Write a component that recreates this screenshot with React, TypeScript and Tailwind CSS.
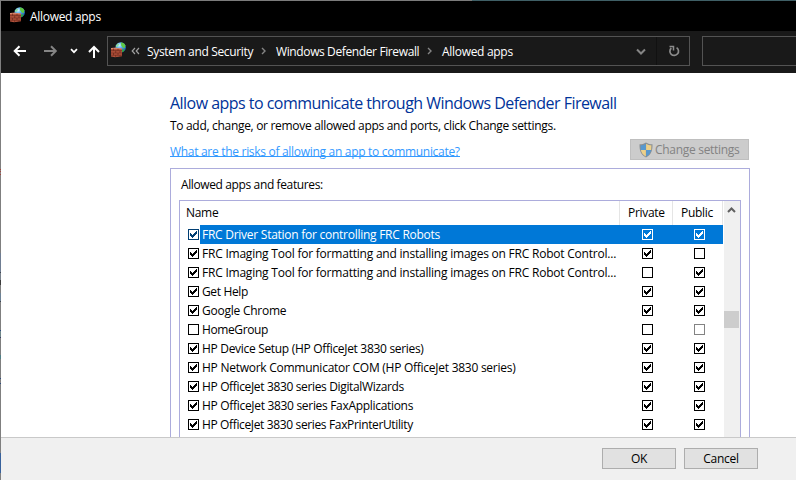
import React from "react";

const BASE = "whitespace-pre [font-family:'Open_Sans','Noto_Sans',sans-serif]";

type Row = { name: string; on: boolean; priv: boolean; pub: boolean; faded?: boolean; fit: string };

const rows: Row[] = [
  { name: "FRC Driver Station for controlling FRC Robots", on: true, priv: true, pub: true, fit: "tracking-[-0.26px]" },
  { name: "FRC Imaging Tool for formatting and installing images on FRC Robot Control...", on: true, priv: true, pub: false, fit: "tracking-[-0.22px]" },
  { name: "FRC Imaging Tool for formatting and installing images on FRC Robot Control...", on: true, priv: false, pub: true, fit: "tracking-[-0.22px]" },
  { name: "Get Help", on: true, priv: true, pub: true, fit: "tracking-[-0.35px]" },
  { name: "Google Chrome", on: true, priv: true, pub: true, fit: "tracking-[-0.24px]" },
  { name: "HomeGroup", on: false, priv: false, pub: false, faded: true, fit: "tracking-[-0.4px]" },
  { name: "HP Device Setup (HP OfficeJet 3830 series)", on: true, priv: true, pub: true, fit: "tracking-[-0.31px]" },
  { name: "HP Network Communicator COM (HP OfficeJet 3830 series)", on: true, priv: true, pub: true, fit: "tracking-[-0.26px]" },
  { name: "HP OfficeJet 3830 series DigitalWizards", on: true, priv: true, pub: true, fit: "tracking-[-0.35px]" },
  { name: "HP OfficeJet 3830 series FaxApplications", on: true, priv: true, pub: true, fit: "tracking-[-0.31px]" },
  { name: "HP OfficeJet 3830 series FaxPrinterUtility", on: true, priv: true, pub: true, fit: "tracking-[-0.36px]" },
];

// One-pixel strip of desktop visible along the window's left edge
const edge: [number, string][] = [
  [169, "bg-[#7f7f7f]"], [1, "bg-[#a0453c]"], [1, "bg-[#858080]"], [1, "bg-[#a0453c]"], [2, "bg-[#858080]"],
  [1, "bg-[#a0453c]"], [78, "bg-[#7f7f7f]"], [19, "bg-[#6f7d92]"], [1, "bg-[#3f4550]"], [7, "bg-[#77808a]"],
  [5, "bg-[#3c3c3c]"], [8, "bg-[#7f7f7f]"], [8, "bg-[#6d8296]"], [1, "bg-[#3f4550]"], [28, "bg-[#7f7f7f]"],
  [1, "bg-[#2d4a7c]"], [6, "bg-[#6f8688]"], [1, "bg-[#3b3b66]"], [17, "bg-[#7f7f7f]"], [4, "bg-[#4f7f86]"],
  [19, "bg-[#7f7f7f]"], [1, "bg-[#2d4a7c]"], [4, "bg-[#7f7f7f]"], [1, "bg-[#2d4a7c]"], [69, "bg-[#7f7f7f]"],
  [20, "bg-[#37619c]"], [7, "bg-[#7f7f7f]"],
];

function Check({ checked, tone = "black" }: { checked: boolean; tone?: "black" | "white" | "navy" | "gray" }) {
  const color = { black: "text-black", white: "text-white", navy: "text-[#003e73]", gray: "text-[#838383]" }[tone];
  const fill = tone === "white" ? "#0078d7" : "#fff";
  return (
    <svg width="11" height="11" viewBox="0 0 11 11" shapeRendering="crispEdges" className={"block shrink-0 " + color}>
      <rect width="11" height="11" fill="currentColor" />
      <rect x="1" y="1" width="9" height="9" fill={fill} />
      {checked && (
        <path
          fill="currentColor"
          d="M8 2h1v3h-1v1h-1v1h-1v1h-1v1h-1v-1h-1v-1h-1v-3h1v1h1v1h1v-1h1v-1h1v-1h1z"
        />
      )}
    </svg>
  );
}

function FirewallIcon() {
  return (
    <svg width="16" height="16" viewBox="0 0 16 16" className="mb-[2px] block shrink-0">
      <defs>
        <radialGradient id="sea" cx="0.35" cy="0.3" r="0.75">
          <stop offset="0" stopColor="#d4f4ff" />
          <stop offset="0.4" stopColor="#55aef0" />
          <stop offset="1" stopColor="#1450b4" />
        </radialGradient>
      </defs>
      <circle cx="10.7" cy="5.4" r="5.200" fill="url(#sea)" />
      <path d="M10.700.6c2.200-.1 3.900 1 4.700 2.900l-.7 2.700-2-.6-1.400-2z" fill="#5fc943" />
      <path d="M6.200 3.200l1.700-1.700 1.300.8-1.300 2.100-2.100.9z" fill="#8bdc9a" />
      <path d="M12.300 7.200l2.600.3-1.600 2.200-1.500.6z" fill="#35a83e" />
      <path d="M1 6l4.500-.2L12 6.500v7.700L5 15.200l-4-.7z" fill="#b5533c" />
      <path d="M1 6l4.500-.2L12 6.500v.8l-6.500-.6L1 7z" fill="#d98f74" />
      <path d="M1 8.700h11M1 11h11M1 13.200h11M3.500 6.500v2.200M8 6.700v2M5.700 8.700V11M10 8.700V11M3.500 11v2.200M8 11v2.200M5.700 13.200v1.800M10 13.200v1.300" stroke="#5e2418" strokeWidth="0.6" fill="none" />
    </svg>
  );
}

function Crumb() {
  return (
    <svg width="6" height="8" viewBox="0 0 6 8" className="block shrink-0" fill="none" stroke="#858585" strokeWidth="1.400">
      <path d="M1 1l3 3-3 3" />
    </svg>
  );
}

function Shield() {
  return (
    <svg width="14" height="16" viewBox="0 0 14 16" className="block shrink-0">
      <path d="M7 .4C5 1.700 3 2.200.5 2.300c0 6 .8 10 6.500 13.300 5.700-3.300 6.500-7.300 6.500-13.300C11 2.200 9 1.700 7 .4z" fill="#8a8f93" />
      <path d="M6.900 1.700C5.200 2.700 3.600 3.200 1.600 3.300l.2 4.700h5.100z" fill="#5798cf" />
      <path d="M7.100 1.700c1.700 1 3.300 1.500 5.300 1.600l-.2 4.700H7.100z" fill="#ecd08a" />
      <path d="M1.900 8.100c.5 2.900 2 4.800 5 6.500V8.100z" fill="#ecd08a" />
      <path d="M12.100 8.100c-.5 2.900-2 4.800-5 6.500V8.100z" fill="#5798cf" />
    </svg>
  );
}

export default function App() {
  return (
    <div className={"flex h-[480px] w-[796px] overflow-hidden bg-white text-[12px] leading-[18px] text-black " + BASE}>
      <div className="flex w-px shrink-0 flex-col">
        {edge.map(([h, c], i) => (
          <div key={i} className={"shrink-0 " + c} style={{ height: h }} />
        ))}
      </div>

      <div className="flex min-w-0 flex-1 flex-col">
        <div className="flex h-px shrink-0">
          <div className="w-[471px] bg-[#7b7b7b]" />
          <div className="flex-1 bg-[#3f5f66]" />
        </div>

        <header className="flex h-[30px] shrink-0 items-center bg-black pl-2 text-white">
          <FirewallIcon />
          <span className="pl-[5px] pt-px tracking-[-0.3px]">Allowed apps</span>
        </header>

        <nav className="flex h-[42px] shrink-0 items-start bg-[#191919] pt-[5px] text-white">
          <div className="flex h-[30px] w-[106px] shrink-0 items-center pl-[12px]">
            <svg width="14" height="12" viewBox="0 0 14 12" fill="none" stroke="#fff" strokeWidth="2">
              <path d="M13 6H2M6.500 1.200L1.700 6l4.800 4.800" />
            </svg>
            <svg width="14" height="12" viewBox="0 0 14 12" fill="none" stroke="#858585" strokeWidth="2" className="ml-[17px]">
              <path d="M0 6h11.500M7 1.200L11.800 6 7 10.800" />
            </svg>
            <svg width="8" height="6" viewBox="0 0 8 6" fill="none" stroke="#fff" strokeWidth="1.700" className="ml-[12px]">
              <path d="M1 1.200l3 3 3-3" />
            </svg>
            <svg width="14" height="14" viewBox="0 0 14 14" fill="none" stroke="#fff" strokeWidth="2" className="ml-[9px] mt-[2px]">
              <path d="M7 13V2M2 7l5-5 5 5" />
            </svg>
          </div>

          <div className="flex h-[30px] w-[583px] shrink-0 items-center border border-[#535353]">
            <div className="flex flex-1 items-center pl-[2px]">
              <FirewallIcon />
              <svg width="9" height="8" viewBox="0 0 9 8" fill="none" stroke="#a0a0a0" strokeWidth="1.200" className="ml-[5px]">
                <path d="M4 1L1.200 4 4 7M8 1L5.200 4 8 7" />
              </svg>
              <span className="w-[121px] pl-[7px] pt-px tracking-[-0.35px]">System and Security</span>
              <Crumb />
              <span className="w-[160px] pl-[9px] pt-px tracking-[-0.38px]">Windows Defender Firewall</span>
              <Crumb />
              <span className="pl-[9px] pt-px tracking-[-0.3px]">Allowed apps</span>
            </div>
            <svg width="10" height="8" viewBox="0 0 10 8" fill="none" stroke="#858585" strokeWidth="2" className="mr-[10px] mt-[2px]">
              <path d="M1 1.500l4 4 4-4" />
            </svg>
            <div className="flex h-full w-[33px] items-center border-l border-[#111] pl-[11px]">
              <svg width="12" height="12" viewBox="0 0 12 12" fill="none" stroke="#8c8c8c" strokeWidth="1.700">
                <path d="M8.600 2.600A4.300 4.300 0 1 1 3.300 3" />
                <path d="M1.500 1.400h4v4" strokeWidth="1.500" />
              </svg>
            </div>
          </div>

          <div className="ml-[12px] h-[30px] flex-1 border border-r-0 border-[#535353]" />
        </nav>

        <main className="flex min-h-0 flex-1 flex-col overflow-hidden pl-[169px]">
          <h1 className="mt-[19px] h-[22px] shrink-0 text-[16px] leading-[22px] tracking-[-0.53px] text-[#003399]">
            Allow apps to communicate through Windows Defender Firewall
          </h1>
          <p className="mt-[3px] h-[18px] shrink-0 tracking-[-0.31px]">
            To add, change, or remove allowed apps and ports, click Change settings.
          </p>
          <div className="flex h-[33px] w-[579px] shrink-0 justify-between pt-[4px]">
            <a className="mt-[3px] h-[15px] w-[290px] border-b border-[#3399ff] leading-[19px] tracking-[-0.3px] text-[#3399ff]">
              What are the risks of allowing an app to communicate?
            </a>
            <button className="flex h-[21px] w-[119px] items-center border border-[#bfbfbf] bg-[#ccc] pl-[8px] text-[#838383]">
              <Shield />
              <span className="pl-[2px] tracking-[-0.3px]">Change settings</span>
            </button>
          </div>

          <section className="flex min-h-0 w-[580px] flex-1 flex-col border border-b-0 border-[#acacdc]">
            <div className="h-[31px] shrink-0 pl-[10px] pt-[7px] tracking-[-0.38px]">Allowed apps and features:</div>
            <div className="ml-[8px] flex min-h-0 w-[562px] flex-1 border border-b-0 border-[#acacdc]">
              <div className="flex w-[544px] flex-col">
                <div className="flex h-[24px] shrink-0 items-center leading-[24px]">
                  <div className="h-full w-[440px] border-r border-[#e5e5e5] pl-[6px] tracking-[-0.3px]">Name</div>
                  <div className="h-full w-[53px] border-r border-[#e5e5e5] pl-[8px] tracking-[-0.3px]">Private</div>
                  <div className="h-full w-[50px] border-r border-[#e5e5e5] pl-[8px] tracking-[-0.3px]">Public</div>
                </div>
                {rows.map((r, i) => {
                  const sel = i === 0;
                  return (
                    <div key={i} className="flex h-[19px] w-[543px] shrink-0">
                      <div className="flex w-[20px] shrink-0 pl-[8px] pt-[4px]">
                        <Check checked={r.on} tone={sel ? "navy" : "black"} />
                      </div>
                      <div className={"flex flex-1 " + (sel ? "bg-[#0078d7] text-white" : "")}>
                        <span className={"w-[442px] pl-[2px] leading-[19px] " + r.fit}>{r.name}</span>
                        <span className="w-[52px] pt-[4px]">
                          <Check checked={r.priv} tone={sel ? "white" : "black"} />
                        </span>
                        <span className="pt-[4px]">
                          <Check checked={r.pub} tone={sel ? "white" : r.faded ? "gray" : "black"} />
                        </span>
                      </div>
                    </div>
                  );
                })}
              </div>
              <div className="flex w-[16px] flex-col bg-[#f0f0f0]">
                <svg width="9" height="6" viewBox="0 0 9 6" className="ml-[3px] mt-[6px] shrink-0" fill="none" stroke="#606060" strokeWidth="2">
                  <path d="M1 5l3.500-3.500L8 5" />
                </svg>
                <div className="mt-[98px] h-[17px] w-[15px] shrink-0 bg-[#cdcdcd]" />
              </div>
            </div>
          </section>
        </main>

        <footer className="flex h-[43px] shrink-0 items-start gap-[8px] border-t border-[#c9c9c9] bg-[#f0f0f0] pl-[601px] pt-[10px]">
          <button className="h-[21px] w-[74px] border border-[#adadad] bg-[#e1e1e1] leading-[19px] tracking-[-0.3px]">OK</button>
          <button className="h-[21px] w-[74px] border border-[#adadad] bg-[#e1e1e1] leading-[19px] tracking-[-0.3px]">Cancel</button>
        </footer>
      </div>
    </div>
  );
}
